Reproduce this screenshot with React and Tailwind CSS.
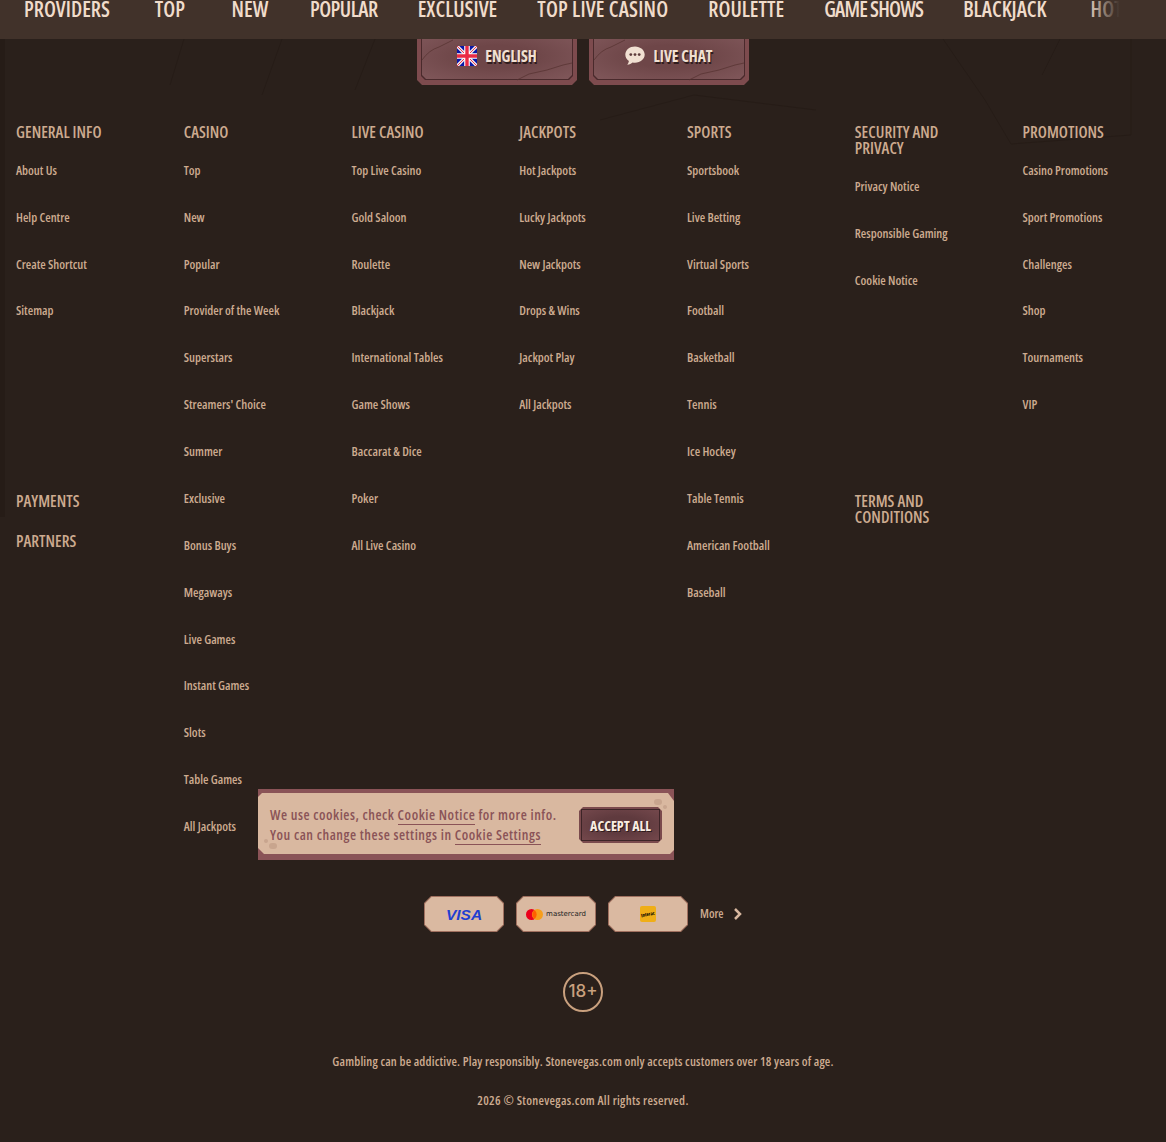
import React from "react";

const cols = [
  { t: ["GENERAL INFO"], l: ["About Us", "Help Centre", "Create Shortcut", "Sitemap"], extra: true },
  { t: ["CASINO"], l: ["Top", "New", "Popular", "Provider of the Week", "Superstars", "Streamers' Choice", "Summer", "Exclusive", "Bonus Buys", "Megaways", "Live Games", "Instant Games", "Slots", "Table Games", "All Jackpots"] },
  { t: ["LIVE CASINO"], l: ["Top Live Casino", "Gold Saloon", "Roulette", "Blackjack", "International Tables", "Game Shows", "Baccarat & Dice", "Poker", "All Live Casino"] },
  { t: ["JACKPOTS"], l: ["Hot Jackpots", "Lucky Jackpots", "New Jackpots", "Drops & Wins", "Jackpot Play", "All Jackpots"] },
  { t: ["SPORTS"], l: ["Sportsbook", "Live Betting", "Virtual Sports", "Football", "Basketball", "Tennis", "Ice Hockey", "Table Tennis", "American Football", "Baseball"] },
  { t: ["SECURITY AND", "PRIVACY"], l: ["Privacy Notice", "Responsible Gaming", "Cookie Notice"], terms: true },
  { t: ["PROMOTIONS"], l: ["Casino Promotions", "Sport Promotions", "Challenges", "Shop", "Tournaments", "VIP"] },
];

const nav = [
  ["PROVIDERS", ""],
  ["TOP", ""],
  ["NEW", ""],
  ["POPULAR", "tracking-[-0.5px]"],
  ["EXCLUSIVE", ""],
  ["TOP LIVE CASINO", "tracking-[0.2px]"],
  ["ROULETTE", ""],
  ["GAME SHOWS", "tracking-[-0.8px]"],
  ["BLACKJACK", ""],
  ["HOT", ""],
];

function Heading({ lines }) {
  return (
    <h3 className="text-[16px] leading-[16px] tracking-[0.05px] text-[#cdab90] font-semibold">
      {lines.map((x) => <div key={x}>{x}</div>)}
    </h3>
  );
}

function Column({ c }) {
  return (
    <div className="w-[167.75px] shrink-0 pr-3">
      <Heading lines={c.t} />
      <ul className="mt-[22.8px] flex flex-col">
        {c.l.map((x) => (
          <li key={x} className="h-[46.875px] text-[12.5px] leading-[16px] text-[#cdab90] font-semibold whitespace-nowrap">{x}</li>
        ))}
      </ul>
    </div>
  );
}

function Flag() {
  return (
    <svg width="20" height="20" viewBox="0 0 20 20" className="shrink-0">
      <rect width="20" height="20" rx="1.5" fill="#0a17a7" />
      <path d="M0 0 L20 20 M20 0 L0 20" stroke="#f3e9ec" strokeWidth="3.2" />
      <path d="M0 0 L20 20 M20 0 L0 20" stroke="#e6273e" strokeWidth="0.9" />
      <path d="M10 0 V20 M0 10 H20" stroke="#fff" strokeWidth="5.6" />
      <path d="M10 0 V20 M0 10 H20" stroke="#ea2a45" strokeWidth="3.4" />
    </svg>
  );
}

function Chat() {
  return (
    <svg width="20" height="20" viewBox="0 0 20 20" className="shrink-0">
      <path d="M10 .5C4.600.5.300 4 .300 8.600c0 2.700 1.400 4.900 3.600 6.400-.200 1.400-.800 2.600-1.600 3.700 2.200-.100 4-.900 5.300-2.100.700.200 1.500.200 2.400.200 5.400 0 9.700-3.700 9.700-8.200S15.400.5 10 .5z" fill="#f1e0d2" />
      <circle cx="5.800" cy="8.600" r="1.400" fill="#5d3a3a" />
      <circle cx="10" cy="8.600" r="1.400" fill="#5d3a3a" />
      <circle cx="14.200" cy="8.600" r="1.400" fill="#5d3a3a" />
    </svg>
  );
}

function StoneButton({ icon, label }) {
  return (
    <div className="relative w-[160px] h-[56px] bg-[#7d4b4e] [clip-path:polygon(5px_0,155px_0,160px_5px,160px_51px,155px_56px,5px_56px,0_51px,0_5px)]">
      <div className="absolute left-[4px] right-[4px] top-[4px] bottom-[5px] bg-[#4a2a2c] [clip-path:polygon(4px_0,calc(100%-4px)_0,100%_4px,100%_calc(100%-4px),calc(100%-4px)_100%,4px_100%,0_calc(100%-4px),0_4px)] p-[1px]">
        <div className="w-full h-full bg-[radial-gradient(ellipse_at_center,#6e4648_35%,#80575a_100%)] [clip-path:polygon(4px_0,calc(100%-4px)_0,100%_4px,100%_calc(100%-4px),calc(100%-4px)_100%,4px_100%,0_calc(100%-4px),0_4px)]" />
      </div>
      <svg className="absolute inset-0" width="160" height="56" viewBox="0 0 160 56" fill="none">
        <path d="M5 31 Q12 21 22 18 L36 11" stroke="#54312f" strokeWidth="0.7" />
        <path d="M100 51 L112 45 L130 41 L146 36 L155 34" stroke="#54312f" strokeWidth="0.7" />
      </svg>
      <div className="relative h-full flex items-center justify-center gap-[8px] pb-[2px]">
        {icon}
        <span className="text-[15.500px] leading-[16px] text-[#f1e0d2] font-bold [text-shadow:1px_2px_0_#2f1c1d]">{label}</span>
      </div>
    </div>
  );
}

function Pay({ children }) {
  return (
    <div className="w-[80px] h-[36px] bg-[#a0705f] p-[1px] [clip-path:polygon(7px_0,73px_0,80px_7px,80px_29px,73px_36px,7px_36px,0_29px,0_7px)]">
      <div className="w-full h-full bg-[#dab9a1] flex items-center justify-center [clip-path:polygon(6.500px_0,71.500px_0,78px_6.500px,78px_27.500px,71.500px_34px,6.500px_34px,0_27.500px,0_6.500px)]">
        {children}
      </div>
    </div>
  );
}

export default function App() {
  return (
    <div className="relative w-[1166px] h-[1142px] overflow-hidden bg-[#2a201b] [font-family:'Open_Sans',sans-serif] [font-stretch:75%]">
      <div className="absolute left-0 top-0 w-[5px] h-[517px] bg-[#261c17]" />
      <svg className="absolute left-0 top-0" width="1166" height="160" viewBox="0 0 1166 160" fill="none">
        <g stroke="#261c17" strokeWidth="1">
          <path d="M943 39 L985 100 L1011 144 L1131 135 V39" />
          <path d="M1060 39 L1042 75" />
          <path d="M600 120 L694 95 L816 110" />
          <path d="M184 39 L170 85 M282 39 L262 95 M375 39 L355 90" />
        </g>
      </svg>

      <nav className="relative z-10 h-[39px] bg-[#41322a] overflow-hidden flex items-start pl-[4px]">
        {nav.map(([n, cls]) => (
          <span key={n} className={`min-w-[80px] px-[20px] text-center text-[21px] leading-[18px] text-[#f0dccb] font-semibold whitespace-nowrap ${cls}`}>{n}</span>
        ))}
        <div className="absolute right-0 top-0 bottom-0 w-[80px] bg-[linear-gradient(to_right,transparent,#41322a_42%)]" />
      </nav>

      <div className="relative -mt-[10px] flex justify-center gap-[12px]">
        <StoneButton icon={<Flag />} label="ENGLISH" />
        <StoneButton icon={<Chat />} label="LIVE CHAT" />
      </div>

      <div className="relative flex pl-[16px] mt-[39px]">
        {cols.map((c, i) => (
          <div key={i} className="relative">
            <Column c={c} />
            {c.extra && (
              <div className="absolute left-0 top-[369px] flex flex-col gap-[24px]">
                <Heading lines={["PAYMENTS"]} />
                <Heading lines={["PARTNERS"]} />
              </div>
            )}
            {c.terms && (
              <div className="absolute left-0 top-[369px]">
                <Heading lines={["TERMS AND", "CONDITIONS"]} />
              </div>
            )}
          </div>
        ))}
      </div>

      <div className="absolute left-[258px] top-[789px] w-[416px] h-[71px] bg-[#8a5357]">
        <div className="relative mt-[4px] h-[61px] bg-[#d9b8a0] flex items-center justify-between pl-[12px] pr-[12px] [clip-path:polygon(4px_0,410px_0,416px_8px,416px_57px,412px_61px,6px_61px,0_55px,0_4px)]">
          <span className="absolute left-[11px] top-[50px] w-[8px] h-[6px] rounded-full bg-[#c8a58e]" />
          <span className="absolute left-[6px] top-[46px] w-[4px] h-[4px] rounded-full bg-[#c8a58e]" />
          <span className="absolute right-[12px] top-[6px] w-[8px] h-[6px] rounded-full bg-[#c8a58e]" />
          <span className="absolute right-[7px] top-[12px] w-[4px] h-[4px] rounded-full bg-[#c8a58e]" />
          <div className="pt-[3px] text-[14px] leading-[20px] text-[#8a5357] font-semibold tracking-[0.55px] whitespace-nowrap">
            <div>We use cookies, check <span className="border-b border-[#8a5357]">Cookie Notice</span> for more info.</div>
            <div>You can change these settings in <span className="border-b border-[#8a5357]">Cookie Settings</span></div>
          </div>
          <div className="relative mt-[3px] w-[83px] h-[36px] bg-[#7a4a4d] [clip-path:polygon(4px_0,79px_0,83px_4px,83px_32px,79px_36px,4px_36px,0_32px,0_4px)] p-[2px]">
            <div className="w-full h-full border border-[#3d2427] bg-[radial-gradient(ellipse_at_center,#5f3a3e_40%,#74484c_100%)] flex items-center justify-center">
              <span className="text-[14px] font-bold text-[#fbeee2] whitespace-nowrap [text-shadow:1px_1px_0_#2f1c1d]">ACCEPT ALL</span>
            </div>
          </div>
        </div>
      </div>

      <div className="absolute left-[424px] top-[896px] flex items-center gap-[12px]">
        <Pay><span className="pt-[1px] text-[#1f3fd0] text-[15.500px] font-black italic [font-family:'Liberation_Sans',sans-serif] [font-stretch:100%]">VISA</span></Pay>
        <Pay>
          <div className="flex items-center gap-[3px]">
            <svg width="17" height="11" viewBox="0 0 17 11"><circle cx="5.500" cy="5.500" r="5.500" fill="#eb001b" /><circle cx="11.500" cy="5.500" r="5.500" fill="#f79e1b" /><path d="M8.500 1.100a5.500 5.500 0 0 1 0 8.800a5.500 5.500 0 0 1 0-8.800z" fill="#ff5f00" /></svg>
            <span className="text-[7px] leading-[8px] text-[#222] [font-family:'DejaVu_Sans',sans-serif] [font-stretch:100%]">mastercard</span>
          </div>
        </Pay>
        <Pay>
          <div className="w-[16px] h-[16px] bg-[#efae17] rounded-[2px] flex items-center justify-center overflow-hidden">
            <span className="text-[5px] leading-[5px] text-black -rotate-12 font-bold">Interac</span>
          </div>
        </Pay>
        <span className="text-[12px] leading-[16px] font-semibold text-[#cdab90]">More</span>
        <svg width="10" height="12" viewBox="0 0 10 12" fill="none" className="-ml-[3px]"><path d="M2 1 L7 6 L2 11" stroke="#d9b8a0" strokeWidth="2.500" /></svg>
      </div>

      <div className="absolute left-[563px] top-[972px] w-[40px] h-[40px] rounded-full border-2 border-[#c9a07e] flex items-center justify-center text-[17px] font-medium text-[#c9a07e] [font-family:Inter,sans-serif] [font-stretch:100%]">18+</div>

      <div className="absolute left-0 right-0 top-[1053px] text-center text-[12.5px] leading-[18px] font-semibold tracking-[0.180px] text-[#cdab90]">Gambling can be addictive. Play responsibly. Stonevegas.com only accepts customers over 18 years of age.</div>
      <div className="absolute left-0 right-0 top-[1092px] text-center text-[12.5px] leading-[18px] font-semibold tracking-[0.300px] text-[#cdab90]">2026 © Stonevegas.com All rights reserved.</div>
    </div>
  );
}
